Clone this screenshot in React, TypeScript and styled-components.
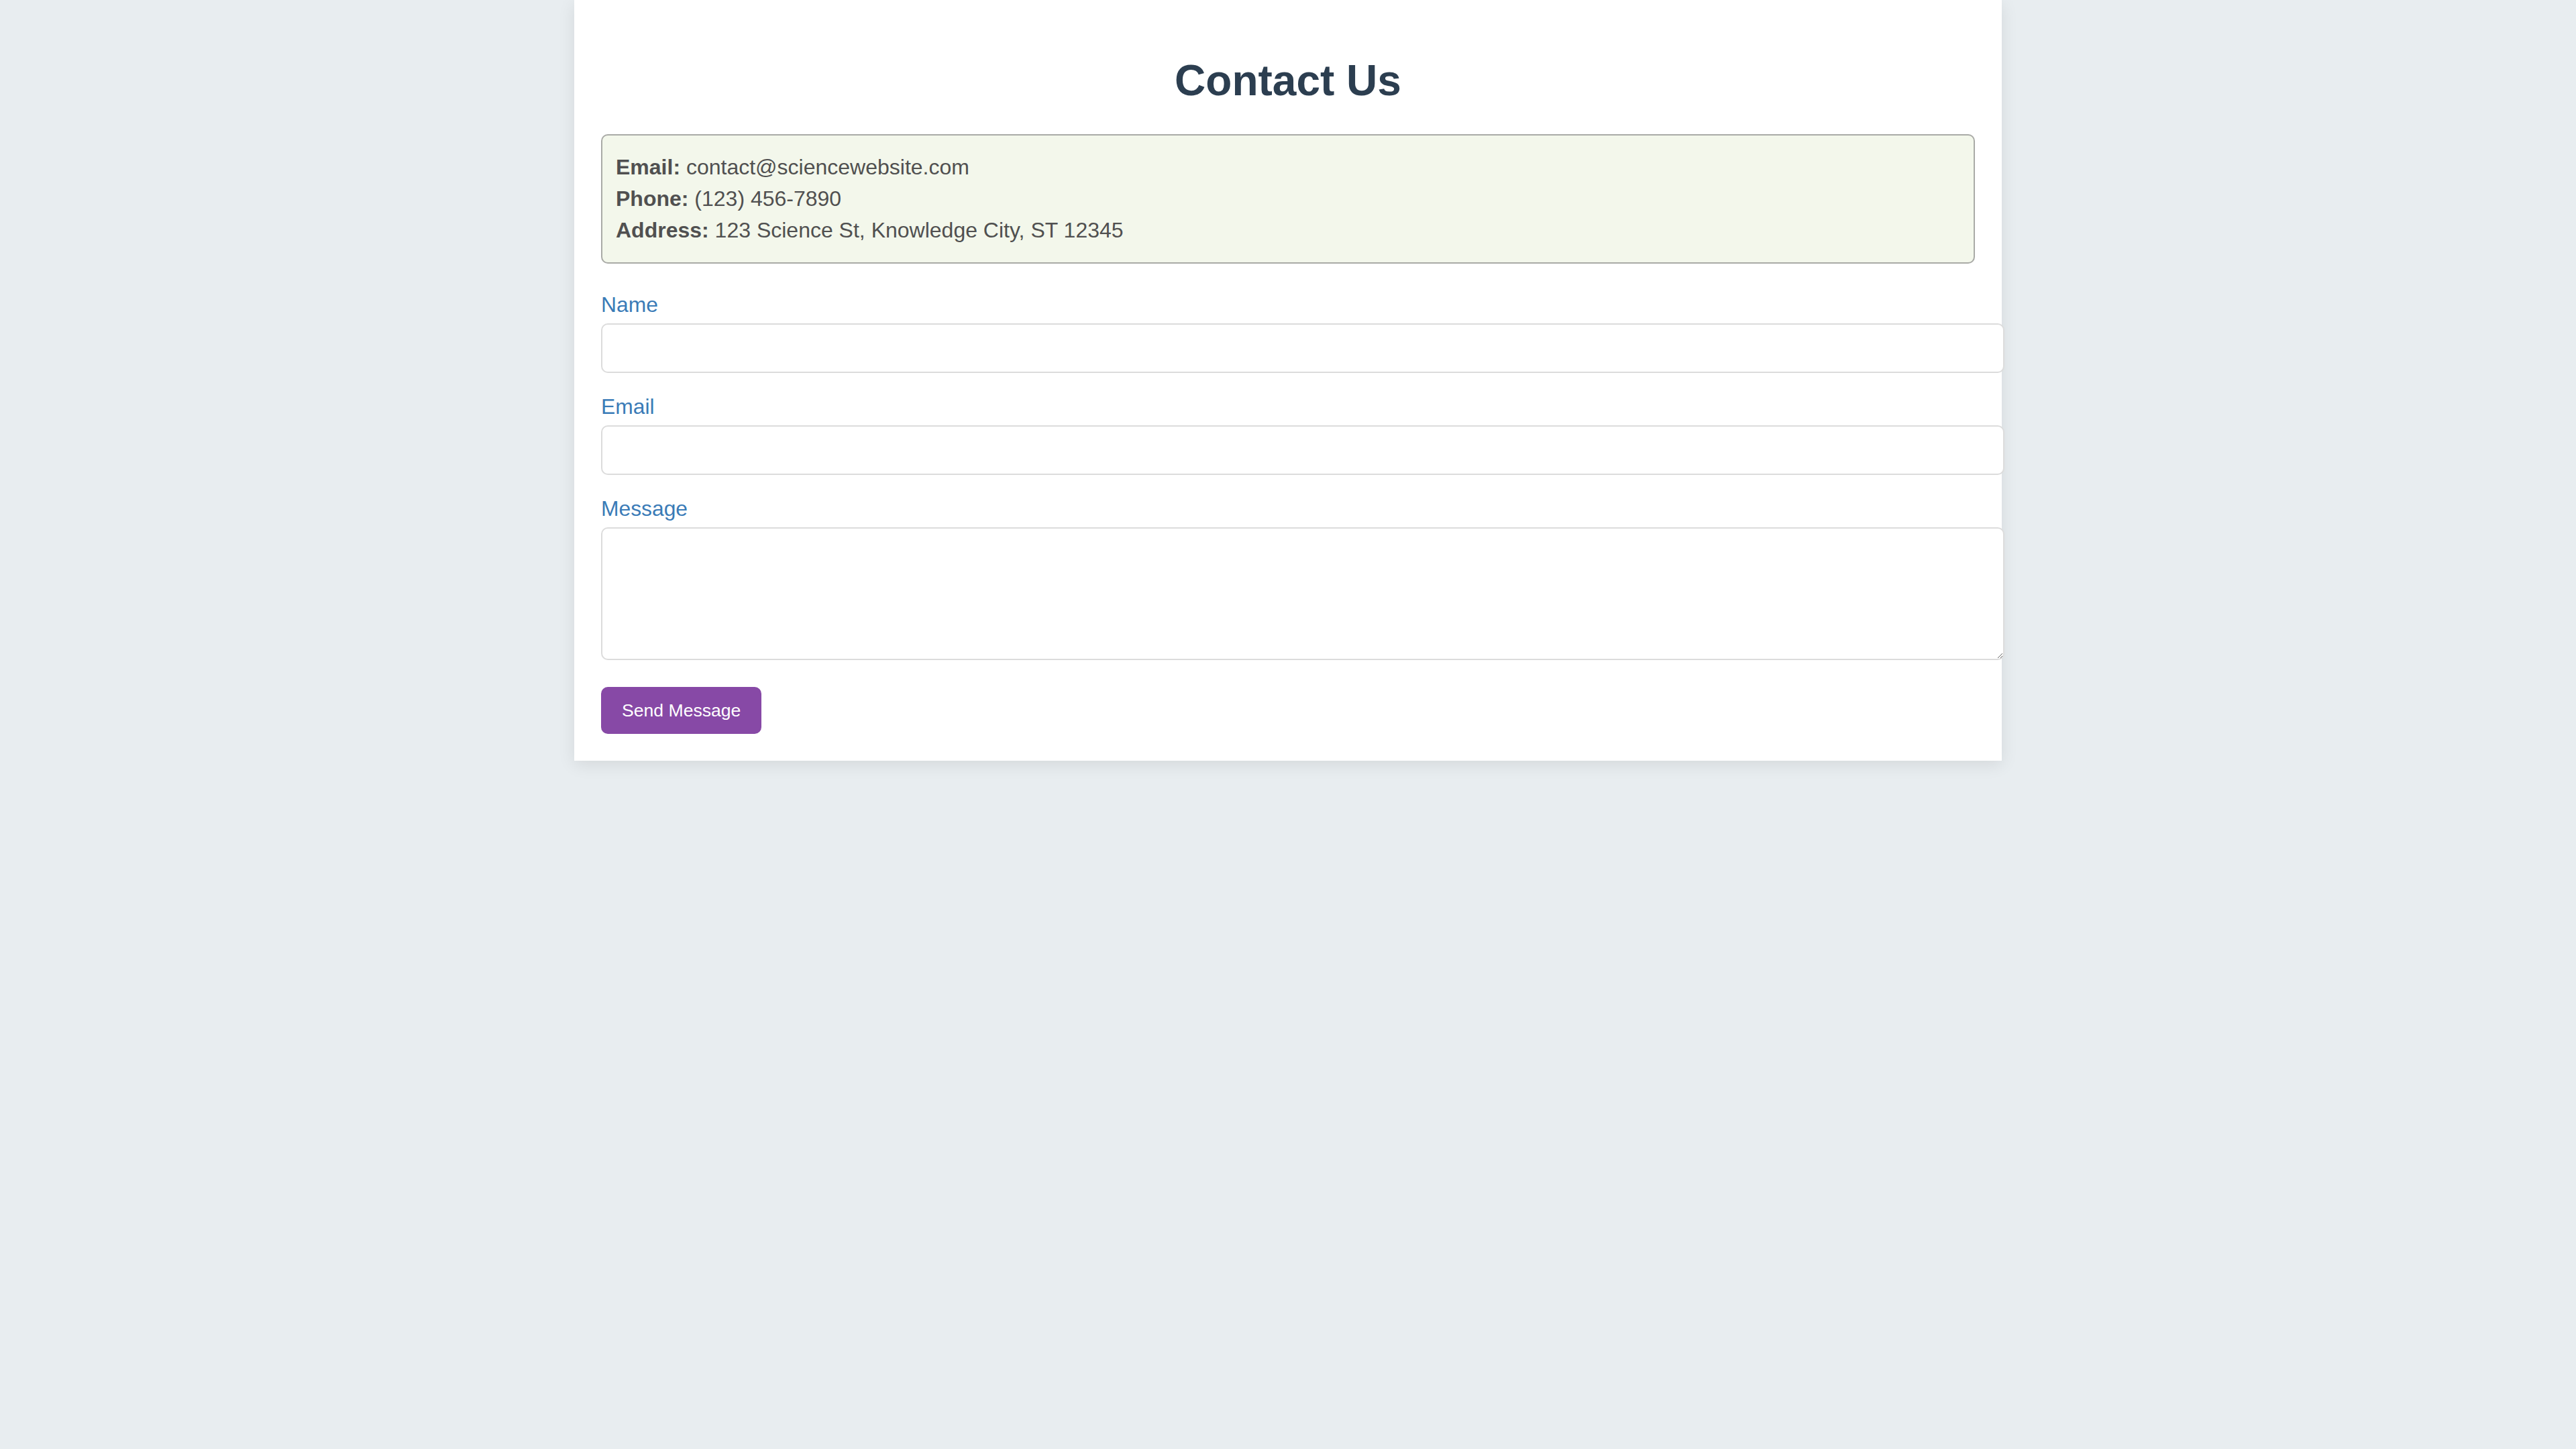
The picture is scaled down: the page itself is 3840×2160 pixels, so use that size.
import React from "react";
import styled, { createGlobalStyle } from "styled-components";

const GlobalStyle = createGlobalStyle`
  html, body {
    margin: 0;
    padding: 0;
    background: #e8edf0;
    font-family: "Liberation Sans", Arial, Helvetica, sans-serif;
  }
  body {
    min-height: 2160px;
  }
`;

const Page = styled.main`
  width: 2128px;
  margin: 0 auto;
  box-sizing: border-box;
  padding: 40px;
  background: #ffffff;
  box-shadow: 0 6px 24px rgba(0, 0, 0, 0.09);
`;

const Title = styled.h1`
  margin: 44px 0 43px;
  text-align: center;
  font-size: 64px;
  font-weight: 700;
  color: #2c3e50;
  line-height: 73px;
`;

const InfoBox = styled.section`
  background: #f3f7eb;
  border: 2px solid #a9aaa6;
  border-radius: 10px;
  padding: 24px 20px;
  margin-bottom: 44px;
`;

const InfoLine = styled.p`
  margin: 0;
  font-size: 32px;
  line-height: 47px;
  color: #505050;

  strong {
    font-weight: 700;
  }
`;

const Form = styled.form`
  display: flex;
  flex-direction: column;
  align-items: flex-start;
`;

const Field = styled.div`
  width: 100%;
  margin-bottom: 33px;
`;

const Label = styled.label`
  display: block;
  font-size: 31.8px;
  line-height: 34px;
  color: #3a7bb7;
  margin-bottom: 11px;
`;

const fieldStyles = `
  display: block;
  width: 100%;
  box-sizing: content-box;
  padding: 0 20px;
  border: 2px solid #dcdcdc;
  border-radius: 10px;
  background: #ffffff;
  font-family: "Liberation Sans", Arial, sans-serif;
  font-size: 29px;
  color: #333;
  outline: none;
  margin: 0;
`;

const TextInput = styled.input`
  ${fieldStyles}
  height: 70px;
`;

const TextArea = styled.textarea`
  ${fieldStyles}
  padding: 20px;
  height: 154px;
  resize: vertical;
`;

const SendButton = styled.button`
  margin-top: 7px;
  background: #8749a6;
  color: #ffffff;
  border: none;
  border-radius: 10px;
  padding: 0 31px;
  height: 70px;
  font-family: "Liberation Sans", Arial, sans-serif;
  font-size: 26.6px;
  cursor: pointer;
`;

export default function App() {
  return (
    <>
      <GlobalStyle />
      <Page>
        <Title>Contact Us</Title>
        <InfoBox>
          <InfoLine>
            <strong>Email:</strong> contact@sciencewebsite.com
          </InfoLine>
          <InfoLine>
            <strong>Phone:</strong> (123) 456-7890
          </InfoLine>
          <InfoLine>
            <strong>Address:</strong> 123 Science St, Knowledge City, ST 12345
          </InfoLine>
        </InfoBox>
        <Form onSubmit={(e) => e.preventDefault()}>
          <Field>
            <Label htmlFor="name">Name</Label>
            <TextInput id="name" type="text" />
          </Field>
          <Field>
            <Label htmlFor="email">Email</Label>
            <TextInput id="email" type="email" />
          </Field>
          <Field>
            <Label htmlFor="message">Message</Label>
            <TextArea id="message" />
          </Field>
          <SendButton type="submit">Send Message</SendButton>
        </Form>
      </Page>
    </>
  );
}
